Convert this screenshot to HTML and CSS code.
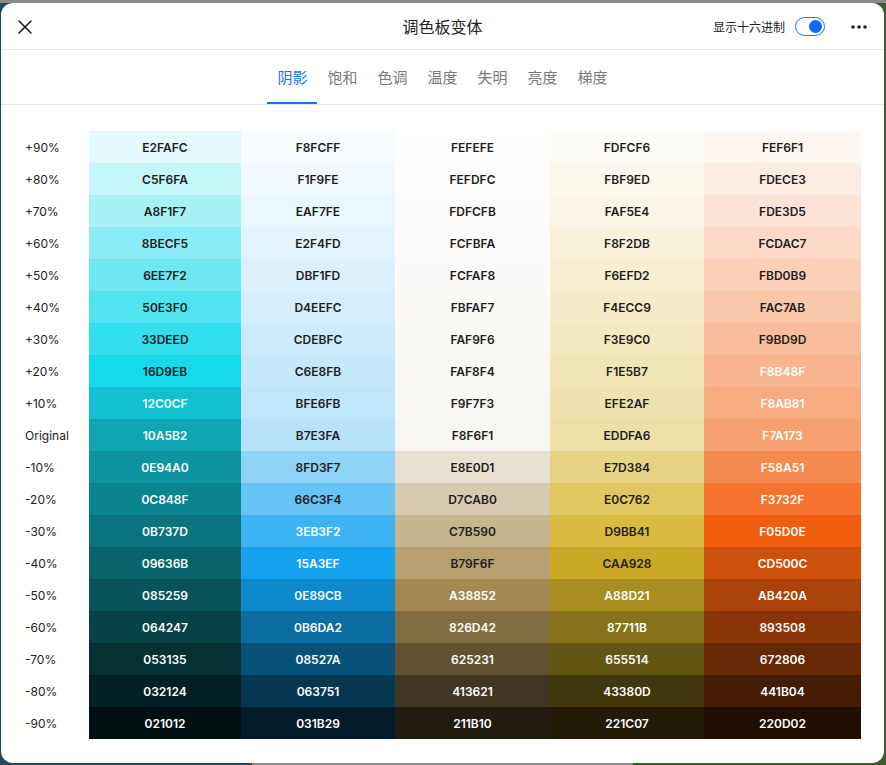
FILE: index.html
```html
<!DOCTYPE html>
<html lang="zh">
<head>
<meta charset="utf-8">
<title>调色板变体</title>
<link rel="stylesheet" href="styles.css">
</head>
<body>
<div class="dialog">
  <header class="header">
    <div class="header-left">
      <button class="icon-btn close" aria-label="关闭">
        <svg width="14" height="14" viewBox="0 0 14 14"><path d="M1 1L13 13M13 1L1 13" stroke="#1f1f1f" stroke-width="1.6" stroke-linecap="round" fill="none"/></svg>
      </button>
    </div>
    <h1 class="title">调色板变体</h1>
    <div class="header-right">
      <span class="hex-label">显示十六进制</span>
      <span class="toggle"><span class="knob"></span></span>
      <button class="icon-btn more" aria-label="更多">
        <svg width="16" height="4" viewBox="0 0 16 4"><circle cx="2" cy="2" r="1.8" fill="#1f1f1f"/><circle cx="8" cy="2" r="1.8" fill="#1f1f1f"/><circle cx="14" cy="2" r="1.8" fill="#1f1f1f"/></svg>
      </button>
    </div>
  </header>
  <nav class="tabs">
    <span class="tab active">阴影</span>
    <span class="tab">饱和</span>
    <span class="tab">色调</span>
    <span class="tab">温度</span>
    <span class="tab">失明</span>
    <span class="tab">亮度</span>
    <span class="tab">梯度</span>
  </nav>
  <main class="content">
    <div class="grid">
      <div class="label">+90%</div>
      <div class="cell" style="background:#E2FAFC">E2FAFC</div>
      <div class="cell" style="background:#F8FCFF">F8FCFF</div>
      <div class="cell" style="background:#FEFEFE">FEFEFE</div>
      <div class="cell" style="background:#FDFCF6">FDFCF6</div>
      <div class="cell" style="background:#FEF6F1">FEF6F1</div>

      <div class="label">+80%</div>
      <div class="cell" style="background:#C5F6FA">C5F6FA</div>
      <div class="cell" style="background:#F1F9FE">F1F9FE</div>
      <div class="cell" style="background:#FEFDFC">FEFDFC</div>
      <div class="cell" style="background:#FBF9ED">FBF9ED</div>
      <div class="cell" style="background:#FDECE3">FDECE3</div>

      <div class="label">+70%</div>
      <div class="cell" style="background:#A8F1F7">A8F1F7</div>
      <div class="cell" style="background:#EAF7FE">EAF7FE</div>
      <div class="cell" style="background:#FDFCFB">FDFCFB</div>
      <div class="cell" style="background:#FAF5E4">FAF5E4</div>
      <div class="cell" style="background:#FDE3D5">FDE3D5</div>

      <div class="label">+60%</div>
      <div class="cell" style="background:#8BECF5">8BECF5</div>
      <div class="cell" style="background:#E2F4FD">E2F4FD</div>
      <div class="cell" style="background:#FCFBFA">FCFBFA</div>
      <div class="cell" style="background:#F8F2DB">F8F2DB</div>
      <div class="cell" style="background:#FCDAC7">FCDAC7</div>

      <div class="label">+50%</div>
      <div class="cell" style="background:#6EE7F2">6EE7F2</div>
      <div class="cell" style="background:#DBF1FD">DBF1FD</div>
      <div class="cell" style="background:#FCFAF8">FCFAF8</div>
      <div class="cell" style="background:#F6EFD2">F6EFD2</div>
      <div class="cell" style="background:#FBD0B9">FBD0B9</div>

      <div class="label">+40%</div>
      <div class="cell" style="background:#50E3F0">50E3F0</div>
      <div class="cell" style="background:#D4EEFC">D4EEFC</div>
      <div class="cell" style="background:#FBFAF7">FBFAF7</div>
      <div class="cell" style="background:#F4ECC9">F4ECC9</div>
      <div class="cell" style="background:#FAC7AB">FAC7AB</div>

      <div class="label">+30%</div>
      <div class="cell" style="background:#33DEED">33DEED</div>
      <div class="cell" style="background:#CDEBFC">CDEBFC</div>
      <div class="cell" style="background:#FAF9F6">FAF9F6</div>
      <div class="cell" style="background:#F3E9C0">F3E9C0</div>
      <div class="cell" style="background:#F9BD9D">F9BD9D</div>

      <div class="label">+20%</div>
      <div class="cell" style="background:#16D9EB">16D9EB</div>
      <div class="cell" style="background:#C6E8FB">C6E8FB</div>
      <div class="cell" style="background:#FAF8F4">FAF8F4</div>
      <div class="cell" style="background:#F1E5B7">F1E5B7</div>
      <div class="cell light" style="background:#F8B48F">F8B48F</div>

      <div class="label">+10%</div>
      <div class="cell light" style="background:#12C0CF">12C0CF</div>
      <div class="cell" style="background:#BFE6FB">BFE6FB</div>
      <div class="cell" style="background:#F9F7F3">F9F7F3</div>
      <div class="cell" style="background:#EFE2AF">EFE2AF</div>
      <div class="cell light" style="background:#F8AB81">F8AB81</div>

      <div class="label">Original</div>
      <div class="cell light" style="background:#10A5B2">10A5B2</div>
      <div class="cell" style="background:#B7E3FA">B7E3FA</div>
      <div class="cell" style="background:#F8F6F1">F8F6F1</div>
      <div class="cell" style="background:#EDDFA6">EDDFA6</div>
      <div class="cell light" style="background:#F7A173">F7A173</div>

      <div class="label">-10%</div>
      <div class="cell light" style="background:#0E94A0">0E94A0</div>
      <div class="cell" style="background:#8FD3F7">8FD3F7</div>
      <div class="cell" style="background:#E8E0D1">E8E0D1</div>
      <div class="cell" style="background:#E7D384">E7D384</div>
      <div class="cell light" style="background:#F58A51">F58A51</div>

      <div class="label">-20%</div>
      <div class="cell light" style="background:#0C848F">0C848F</div>
      <div class="cell" style="background:#66C3F4">66C3F4</div>
      <div class="cell" style="background:#D7CAB0">D7CAB0</div>
      <div class="cell" style="background:#E0C762">E0C762</div>
      <div class="cell light" style="background:#F3732F">F3732F</div>

      <div class="label">-30%</div>
      <div class="cell light" style="background:#0B737D">0B737D</div>
      <div class="cell light" style="background:#3EB3F2">3EB3F2</div>
      <div class="cell" style="background:#C7B590">C7B590</div>
      <div class="cell" style="background:#D9BB41">D9BB41</div>
      <div class="cell light" style="background:#F05D0E">F05D0E</div>

      <div class="label">-40%</div>
      <div class="cell light" style="background:#09636B">09636B</div>
      <div class="cell light" style="background:#15A3EF">15A3EF</div>
      <div class="cell" style="background:#B79F6F">B79F6F</div>
      <div class="cell" style="background:#CAA928">CAA928</div>
      <div class="cell light" style="background:#CD500C">CD500C</div>

      <div class="label">-50%</div>
      <div class="cell light" style="background:#085259">085259</div>
      <div class="cell light" style="background:#0E89CB">0E89CB</div>
      <div class="cell light" style="background:#A38852">A38852</div>
      <div class="cell light" style="background:#A88D21">A88D21</div>
      <div class="cell light" style="background:#AB420A">AB420A</div>

      <div class="label">-60%</div>
      <div class="cell light" style="background:#064247">064247</div>
      <div class="cell light" style="background:#0B6DA2">0B6DA2</div>
      <div class="cell light" style="background:#826D42">826D42</div>
      <div class="cell light" style="background:#87711B">87711B</div>
      <div class="cell light" style="background:#893508">893508</div>

      <div class="label">-70%</div>
      <div class="cell light" style="background:#053135">053135</div>
      <div class="cell light" style="background:#08527A">08527A</div>
      <div class="cell light" style="background:#625231">625231</div>
      <div class="cell light" style="background:#655514">655514</div>
      <div class="cell light" style="background:#672806">672806</div>

      <div class="label">-80%</div>
      <div class="cell light" style="background:#032124">032124</div>
      <div class="cell light" style="background:#063751">063751</div>
      <div class="cell light" style="background:#413621">413621</div>
      <div class="cell light" style="background:#43380D">43380D</div>
      <div class="cell light" style="background:#441B04">441B04</div>

      <div class="label">-90%</div>
      <div class="cell light" style="background:#021012">021012</div>
      <div class="cell light" style="background:#031B29">031B29</div>
      <div class="cell light" style="background:#211B10">211B10</div>
      <div class="cell light" style="background:#221C07">221C07</div>
      <div class="cell light" style="background:#220D02">220D02</div>
    </div>
  </main>
</div>
</body>
</html>
```

FILE: styles.css
```css
* { box-sizing: border-box; }

html, body {
  margin: 0;
  padding: 0;
}

body {
  width: 886px;
  height: 765px;
  overflow: hidden;
  background:
    linear-gradient(#8a8a8a, #8a8a8a) top left / 100% 3px no-repeat,
    linear-gradient(to right, #24475c 0 252px, #8c8c8c 252px 633px, #3c5a2c 633px 100%);
  font-family: Inter, "Noto Sans", "Noto Sans CJK SC", sans-serif;
}

.dialog {
  margin: 3px 0 0 1px;
  width: 883px;
  height: 760px;
  background: #fff;
  border-radius: 12px;
  overflow: hidden;
  display: flex;
  flex-direction: column;
}

.header {
  height: 47px;
  flex: none;
  display: grid;
  grid-template-columns: 1fr auto 1fr;
  align-items: center;
  border-bottom: 1px solid #e9e9e9;
}

.header-left {
  padding-left: 17px;
  display: flex;
  align-items: center;
}

.icon-btn {
  border: 0;
  background: none;
  padding: 0;
  margin: 0;
  display: flex;
  align-items: center;
  justify-content: center;
  cursor: pointer;
}

.close { width: 14px; height: 14px; margin-top: 1px; }

.title {
  margin: 0;
  font-family: "Noto Sans CJK SC", "Noto Sans", sans-serif;
  font-size: 16px;
  font-weight: 400;
  color: #222;
  line-height: 20px;
}

.header-right {
  display: flex;
  align-items: center;
  justify-content: flex-end;
  padding-right: 17px;
}

.hex-label {
  font-family: "Noto Sans CJK SC", "Noto Sans", sans-serif;
  font-size: 12px;
  color: #1f1f1f;
  line-height: 16px;
  margin-top: 1px;
}

.toggle {
  margin-left: 10px;
  width: 30px;
  height: 19px;
  border: 1.5px solid #1a73f5;
  border-radius: 10px;
  background: #fff;
  display: flex;
  align-items: center;
  justify-content: flex-end;
  padding-right: 2.5px;
}

.knob {
  width: 13px;
  height: 13px;
  border-radius: 50%;
  background: #0f6cf6;
}

.more {
  margin-left: 26px;
  width: 16px;
  height: 4px;
  margin-top: 1px;
}

.tabs {
  height: 55px;
  flex: none;
  display: flex;
  justify-content: center;
  align-items: stretch;
  border-bottom: 1px solid #e9e9e9;
}

.tab {
  padding: 1px 10px 0;
  display: flex;
  align-items: center;
  font-family: "Noto Sans CJK SC", "Noto Sans", sans-serif;
  font-size: 15px;
  color: #7a7a7a;
  border-bottom: 2px solid transparent;
}

.tab.active {
  color: #1a73f5;
  border-bottom-color: #1a73f5;
}

.content {
  padding: 26px 23px 0 24px;
}

.grid {
  display: grid;
  grid-template-columns: 64px 152px 154px 155px 154px 157px;
  grid-auto-rows: 32px;
}

.label {
  display: flex;
  align-items: center;
  font-size: 12px;
  color: #222;
}

.cell {
  display: flex;
  align-items: center;
  justify-content: center;
  font-size: 12px;
  font-weight: 600;
  color: #1d1d1d;
}

.cell.light {
  color: #fff;
}
```
